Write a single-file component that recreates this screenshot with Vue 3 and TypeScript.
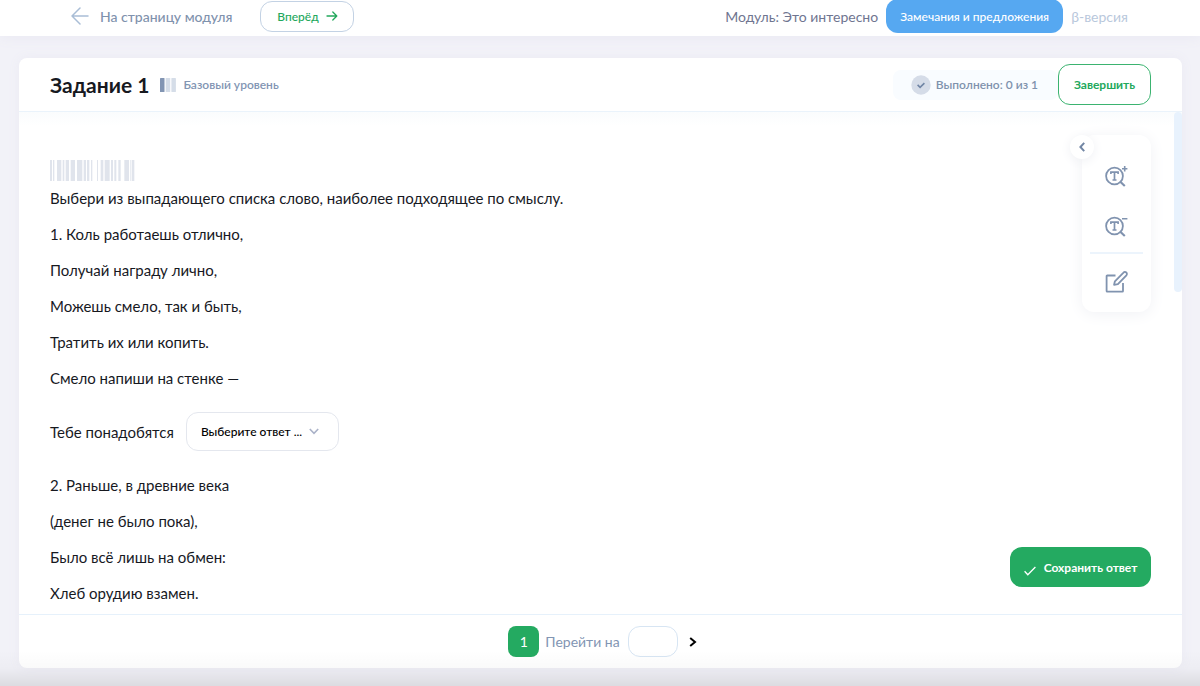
<script setup lang="ts">
import { ref } from 'vue'

const firstVerse: string[] = [
  'Выбери из выпадающего списка слово, наиболее подходящее по смыслу.',
  '1. Коль работаешь отлично,',
  'Получай награду лично,',
  'Можешь смело, так и быть,',
  'Тратить их или копить.',
  'Смело напиши на стенке —',
]
const secondVerse: string[] = [
  '2. Раньше, в древние века',
  '(денег не было пока),',
  'Было всё лишь на обмен:',
  'Хлеб орудию взамен.',
]

// [x, width] of each bar, in thirds of a pixel
const bars: [number, number][] = [
  [0, 6], [9, 4], [21, 13], [38, 5], [47, 10], [62, 13], [81, 16], [101, 7], [111, 7], [123, 4],
  [141, 3], [152, 8], [164, 15], [183, 6], [193, 6], [205, 7], [223, 14], [240, 2], [245, 8],
]

const answer = ref('')
const page = ref('')
</script>

<template>
  <div class="app">
    <header class="topbar">
      <a class="back" href="#">
        <svg width="18" height="18" viewBox="0 0 18 18" fill="none" stroke="#a9bdd6" stroke-width="1.5" stroke-linecap="round" stroke-linejoin="round"><path d="M17 9H1M9 1 1 9l8 8" /></svg>
        На страницу модуля
      </a>
      <button class="forward" type="button">
        Вперёд
        <svg width="12" height="10" viewBox="0 0 12 10" fill="none" stroke="#23a85c" stroke-width="1.3" stroke-linecap="round" stroke-linejoin="round"><path d="M1 5h9.6M6.800 1l4 4-4 4" /></svg>
      </button>
      <span class="module">Модуль: Это интересно</span>
      <button class="feedback" type="button">Замечания и предложения</button>
      <span class="beta">β-версия</span>
    </header>

    <main class="card">
      <div class="card-head">
        <h1>Задание 1</h1>
        <svg class="level-icon" width="16" height="14" viewBox="0 0 16 14"><rect width="4.500" height="14" rx=".6" fill="#8295b3" /><rect x="5.700" width="4.500" height="14" rx=".6" fill="#d5dde8" /><rect x="11.400" width="4.500" height="14" rx=".6" fill="#d5dde8" /></svg>
        <span class="level">Базовый уровень</span>
        <div class="done">
          <svg width="20" height="20" viewBox="0 0 20 20" fill="none"><circle cx="10" cy="10" r="9.700" fill="#d5dce8" /><path d="m6.600 9.900 2.500 2.400 4.300-4.200" stroke="#7085a5" stroke-width="1.600" /></svg>
          Выполнено: 0 из 1
        </div>
        <button class="finish" type="button">Завершить</button>
      </div>

      <section class="content">
        <div class="task">
          <svg class="barcode" width="85" height="21" viewBox="0 0 255 63" fill="#e0e4ec"><rect v-for="bar in bars" :key="bar[0]" :x="bar[0]" :width="bar[1]" height="63" /></svg>
          <p v-for="line in firstVerse" :key="line">{{ line }}</p>
          <div class="choice">
            <label for="answer">Тебе понадобятся</label>
            <span class="select">
              <select id="answer" v-model="answer">
                <option value="">Выберите ответ ...</option>
              </select>
              <svg width="10" height="7" viewBox="0 0 10 7" fill="none" stroke="#aab2c8" stroke-width="1.600"><path d="m.8 1 4.200 4.300L9.200 1" /></svg>
            </span>
          </div>
          <p v-for="line in secondVerse" :key="line">{{ line }}</p>
        </div>

        <div class="scroll-thumb"></div>

        <aside class="tools">
          <button class="collapse" type="button" aria-label="Свернуть">
            <svg width="6" height="10" viewBox="0 0 6 10" fill="none" stroke="#7387a5" stroke-width="2"><path d="M5.200.8 1.400 5l3.800 4.200" /></svg>
          </button>
          <button class="tool" type="button" aria-label="Увеличить текст">
            <svg width="24" height="24" viewBox="1 0 24 24" fill="none" stroke="#8093af" stroke-width="1.800"><circle cx="10.500" cy="12" r="8.400" /><path d="m16 17.500 4.800 4.500" stroke-width="2.200" /><path d="M6.900 10V8.200h7.200V10M10.500 8.200v7.800M8.500 16h4" stroke-width="1.700" /><path d="M18 4.800h5.400M20.700 2v5.600" stroke-width="1.600" /></svg>
          </button>
          <button class="tool" type="button" aria-label="Уменьшить текст">
            <svg width="24" height="24" viewBox="1 0 24 24" fill="none" stroke="#8093af" stroke-width="1.800"><circle cx="10.500" cy="12" r="8.400" /><path d="m16 17.500 4.800 4.500" stroke-width="2.200" /><path d="M6.900 10V8.200h7.200V10M10.500 8.200v7.800M8.500 16h4" stroke-width="1.700" /><path d="M18 4.800h5.400" stroke-width="1.600" /></svg>
          </button>
          <hr />
          <button class="tool" type="button" aria-label="Заметки">
            <svg width="24" height="24" viewBox="1 0 24 24" fill="none" stroke="#8093af" stroke-width="1.800" stroke-linejoin="round"><path d="M11.500 5.500H3.200a.6.600 0 0 0-.6.600v15a.6.600 0 0 0 .6.600h15.200a.6.600 0 0 0 .6-.6V13" /><path d="m10.900 11.300 8.600-8.700a1.900 1.900 0 0 1 2.900 2.700l-8.500 8.800-3.800.7z" /></svg>
          </button>
        </aside>

        <button class="save" type="button">
          <svg width="12" height="10" viewBox="0 0 12 10" fill="none" stroke="#fff" stroke-width="1.300"><path d="m.6 5.200 3.200 3.500L11.400 1" /></svg>
          Сохранить ответ
        </button>
      </section>

      <footer class="pager">
        <button class="current" type="button">1</button>
        <label for="page">Перейти на</label>
        <input id="page" v-model="page" type="text" />
        <button class="next" type="button" aria-label="Следующая">
          <svg width="8" height="10" viewBox="0 0 8 10" fill="none" stroke="#000" stroke-width="2"><path d="m1.200 1 4.800 4-4.800 4" /></svg>
        </button>
      </footer>
    </main>
    <div class="fade"></div>
  </div>
</template>

<style>
body {
  margin: 0;
}
</style>

<style scoped>
.app {
  position: relative;
  display: flex;
  flex-direction: column;
  height: 100vh;
  overflow: hidden;
  background: #f2f2f8;
  color: #17191f;
  font-family: Lato, "Liberation Sans", sans-serif;
  font-size: 15px;
}
*,
*::before {
  box-sizing: border-box;
}
button,
input,
select {
  font: inherit;
  padding: 0;
}
button {
  cursor: pointer;
  white-space: nowrap;
}
svg {
  display: block;
  flex: none;
}
.topbar {
  display: flex;
  align-items: center;
  flex: none;
  height: 36px;
  padding: 0 72px 4px 71px;
  background: #fff;
  box-shadow: 0 1px 14px #e9e8f2;
  color: #6f7590;
  font-size: 14px;
  white-space: nowrap;
}
.back {
  display: flex;
  align-items: center;
  gap: 11px;
  color: #7f92ad;
  font-weight: 500;
  text-decoration: none;
}
.forward {
  display: flex;
  align-items: center;
  justify-content: center;
  gap: 7px;
  width: 94px;
  height: 31px;
  margin: 0 auto 0 28px;
  border: 1px solid #c3d2e4;
  border-radius: 12px;
  background: #fff;
  color: #23a85c;
  font-size: 12px;
  font-weight: 500;
}
.feedback {
  width: 177px;
  height: 34px;
  margin: 0 8px;
  border: 0;
  border-radius: 12px;
  background: #56a8f1;
  color: #fff;
  font-size: 12px;
  font-weight: 500;
}
.beta {
  color: #b9c8dc;
}
.card {
  display: flex;
  flex-direction: column;
  flex: 1;
  min-height: 0;
  margin: 22px 18px 18px 19px;
  border-radius: 8px;
  background: #fff;
  box-shadow: 0 0 12px #ebeaf3;
  overflow: hidden;
}
.card-head {
  display: flex;
  align-items: center;
  flex: none;
  height: 54px;
  padding: 0 31px;
  border-bottom: 1px solid #eaf3fb;
  white-space: nowrap;
}
h1 {
  margin: 0;
  font-size: 21px;
  font-weight: 700;
}
.level-icon {
  margin: 0 7px 0 11px;
}
.level {
  color: #8295b3;
  font-size: 12px;
  font-weight: 600;
}
.done {
  display: flex;
  align-items: center;
  gap: 5px;
  height: 30px;
  margin-left: auto;
  padding: 0 20px 0 18px;
  border-radius: 8px;
  background: #f9fcff;
  color: #7f92ad;
  font-size: 12px;
  font-weight: 600;
}
.finish {
  width: 93px;
  height: 41px;
  border: 1px solid #3bb370;
  border-radius: 12px;
  background: #fff;
  color: #23a85c;
  font-size: 12px;
  font-weight: 700;
}
.content {
  position: relative;
  flex: 1;
  min-height: 0;
  background: linear-gradient(#fafcfd, #fff 14px);
}
.task {
  height: 100%;
  padding: 48px 31px 0;
  overflow: hidden;
}
.barcode {
  margin-bottom: -1px;
}
p {
  margin: 0;
  line-height: 36px;
}
.choice {
  display: flex;
  align-items: center;
  gap: 12px;
  margin: 16px 0;
}
.select {
  position: relative;
}
select {
  display: block;
  width: 153px;
  height: 39px;
  padding: 0 30px 0 14px;
  border: 1px solid #e4e7ee;
  border-radius: 12px;
  appearance: none;
  background: #fff;
  color: #000;
  font-size: 12px;
  font-weight: 500;
}
.select svg {
  position: absolute;
  top: 16px;
  right: 20px;
  pointer-events: none;
}
.scroll-thumb {
  position: absolute;
  top: 0;
  right: 0;
  width: 8px;
  height: 180px;
  border-radius: 4px;
  background: #e8f2fd;
}
.tools {
  position: absolute;
  top: 23px;
  right: 31px;
  width: 69px;
  padding: 16px 8px 5px;
  border-radius: 12px;
  background: #fff;
  box-shadow: 0 2px 16px #f0f1f5;
}
.collapse {
  position: absolute;
  top: 0;
  left: -12px;
  display: grid;
  place-items: center;
  width: 24px;
  height: 24px;
  border: 0;
  border-radius: 50%;
  background: #fff;
  box-shadow: 0 2px 12px #eff0f4;
}
.tool {
  display: grid;
  place-items: center;
  width: 100%;
  height: 50px;
  border: 0;
  background: none;
}
hr {
  height: 2px;
  margin: 1px 0 3px;
  border: 0;
  background: #ecf4fc;
}
.save {
  position: absolute;
  right: 31px;
  bottom: 27px;
  display: flex;
  align-items: center;
  justify-content: center;
  gap: 8px;
  width: 141px;
  height: 40px;
  border: 0;
  border-radius: 12px;
  background: #24aa61;
  color: #fff;
  font-size: 12px;
  font-weight: 700;
}
.save svg {
  margin-top: 8px;
}
.pager {
  display: flex;
  align-items: center;
  justify-content: center;
  flex: none;
  height: 54px;
  padding-left: 4px;
  border-top: 1px solid #e6f1fb;
  color: #8295b3;
  font-size: 14px;
}
.current {
  width: 31px;
  height: 31px;
  margin-right: 6px;
  border: 0;
  border-radius: 8px;
  background: #24aa61;
  color: #fff;
}
.pager input {
  width: 50px;
  height: 31px;
  margin: 0 11px 0 8px;
  padding: 0 8px;
  border: 1px solid #d7e5f3;
  border-radius: 12px;
  background: #fff;
  color: #17191f;
}
.next {
  border: 0;
  background: none;
}
.fade {
  position: absolute;
  inset: auto 0 0;
  height: 36px;
  background: linear-gradient(#00000000, #00000005 50%, #00000018);
  pointer-events: none;
}
</style>
